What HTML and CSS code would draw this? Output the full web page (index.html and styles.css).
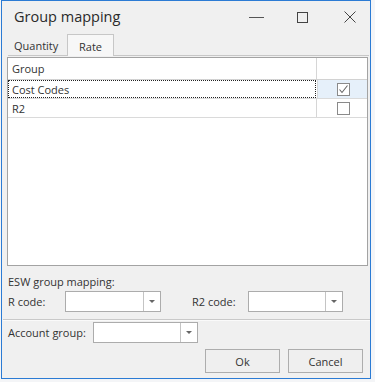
FILE: index.html
```html
<!DOCTYPE html>
<html>
<head>
<meta charset="utf-8">
<link rel="stylesheet" href="styles.css">
</head>
<body>
<div class="window">
  <div class="titlebar">
    <span class="title">Group mapping</span>
    <svg class="ic-min" width="15" height="11" viewBox="0 0 15 11"><path d="M0 5.5H15" stroke="#555" stroke-width="1"/></svg>
    <svg class="ic-max" width="11" height="11" viewBox="0 0 11 11"><rect x="0.5" y="0.5" width="10" height="10" fill="none" stroke="#444" stroke-width="1"/></svg>
    <svg class="ic-close" width="12" height="12" viewBox="0 0 12 12"><path d="M0.5 0.5L11.5 11.5M11.5 0.5L0.5 11.5" stroke="#444" stroke-width="1"/></svg>
  </div>
  <div class="tabs">
    <span class="tab">Quantity</span>
    <span class="tab active">Rate</span>
    <span class="tabfill"></span>
  </div>
  <div class="page">
    <div class="grid">
      <div class="row head"><div class="c1">Group</div><div class="c2"></div></div>
      <div class="row"><div class="c1 focus">Cost Codes</div><div class="c2 selcell"><span class="chk"><svg width="11" height="11" viewBox="0 0 11 11"><path d="M1.5 5.5L4 8.5L9.5 1.5" fill="none" stroke="#666" stroke-width="1.1"/></svg></span></div></div>
      <div class="row"><div class="c1">R2</div><div class="c2"><span class="chk"></span></div></div>
    </div>
    <div class="esw">ESW group mapping:</div>
    <div class="line codes">
      <span class="lbl l1">R code:</span>
      <span class="combo w96"><span class="field"></span><span class="arrow"></span></span>
      <span class="lbl l2">R2 code:</span>
      <span class="combo w95"><span class="field"></span><span class="arrow"></span></span>
    </div>
  </div>
  <div class="sep"></div>
  <div class="line acct">
    <span class="lbl l3">Account group:</span>
    <span class="combo w105"><span class="field"></span><span class="arrow"></span></span>
  </div>
  <div class="buttons">
    <button class="btn">Ok</button>
    <button class="btn">Cancel</button>
  </div>
</div>
</body>
</html>
```

FILE: styles.css
```css
html, body {
  margin: 0;
  padding: 0;
  background: #f4f5f7;
}
.window {
  box-sizing: border-box;
  width: 370px;
  height: 379px;
  margin-left: 1px;
  border: 1px solid #2b7bd4;
  background: #f0f0f0;
  display: flex;
  flex-direction: column;
  font-family: "Open Sans", "Liberation Sans", sans-serif;
  font-size: 11px;
  color: #222;
}
.titlebar {
  height: 32px;
  display: flex;
  align-items: center;
  padding-left: 12px;
}
.title {
  font-size: 14.5px;
  color: #2a2a2a;
  flex: 1;
  margin-top: -1px;
}
.ic-min { margin-right: 33px; }
.ic-max { margin-right: 36px; }
.ic-close { margin-right: 14px; }
.tabs {
  height: 23px;
  display: flex;
  align-items: stretch;
  padding-left: 6px;
}
.tab {
  box-sizing: border-box;
  display: flex;
  align-items: center;
  border-bottom: 1px solid #c7c7c7;
  color: #333;
}
.tab:first-child {
  width: 59px;
  padding-left: 6px;
  padding-top: 2px;
}
.tab.active {
  width: 47px;
  margin-top: 1px;
  justify-content: center;
  border: 1px solid #c7c7c7;
  border-bottom: none;
  background: #f7f7f7;
  padding-top: 1px;
}
.tabfill {
  flex: 1;
  border-bottom: 1px solid #c7c7c7;
  margin-right: 1px;
}
.page {
  padding: 1px 0 0 5px;
}
.grid {
  box-sizing: border-box;
  width: 361px;
  height: 209px;
  border: 1px solid #a3a3a3;
  background: #fff;
}
.row {
  display: flex;
  height: 19px;
  box-sizing: border-box;
  border-bottom: 1px solid #dadada;
}
.row.head {
  height: 22px;
  border-bottom-color: #d2d2d2;
}
.c1 {
  box-sizing: border-box;
  width: 309px;
  border-right: 1px solid #d6d6d6;
  padding-left: 4px;
  display: flex;
  align-items: center;
  color: #333;
}
.c1.focus {
  border: 1px dotted #222;
  padding-left: 3px;
  width: 308px;
  margin-right: 1px;
}
.c2 {
  flex: 1;
  display: flex;
  align-items: center;
  justify-content: center;
}
.selcell {
  background: #e6f0fa;
  border-left: 1px solid #d6d6d6;
}
.chk {
  box-sizing: border-box;
  width: 13px;
  height: 13px;
  border: 1px solid #8a8a8a;
  background: #fff;
  display: flex;
  align-items: center;
  justify-content: center;
  margin-left: 2px;
}
.esw {
  height: 16px;
  line-height: 16px;
  margin-top: 8px;
  padding-left: 1px;
  color: #333;
}
.line {
  display: flex;
  align-items: center;
  height: 21px;
}
.codes {
  margin-top: 1px;
  padding-left: 1px;
}
.lbl {
  color: #333;
}
.l1 { width: 57px; }
.l2 { width: 56px; margin-left: 31px; }
.l3 { width: 85px; }
.combo {
  box-sizing: border-box;
  height: 21px;
  display: flex;
  border: 1px solid #acacac;
  background: #fff;
}
.w96 { width: 96px; }
.w95 { width: 95px; }
.w105 { width: 105px; }
.field { flex: 1; }
.arrow {
  box-sizing: border-box;
  width: 17px;
  border-left: 1px solid #c4c4c4;
  display: flex;
  align-items: center;
  justify-content: center;
}
.arrow::after {
  content: "";
  width: 0;
  height: 0;
  border-left: 3px solid transparent;
  border-right: 3px solid transparent;
  border-top: 3px solid #666;
}
.sep {
  height: 1px;
  background: #c9c9c9;
  margin: 7px 0 0 1px;
  border-bottom: 1px solid #fafafa;
}
.acct {
  margin-top: 1px;
  padding-left: 6px;
}
.buttons {
  display: flex;
  justify-content: flex-end;
  gap: 8px;
  margin-top: 6px;
  padding-right: 7px;
}
.btn {
  box-sizing: border-box;
  width: 75px;
  height: 24px;
  border: 1px solid #adadad;
  background: #efefef;
  font-family: "Open Sans", "Liberation Sans", sans-serif;
  font-size: 11px;
  color: #333;
  padding: 0;
  margin: 0;
}
```
